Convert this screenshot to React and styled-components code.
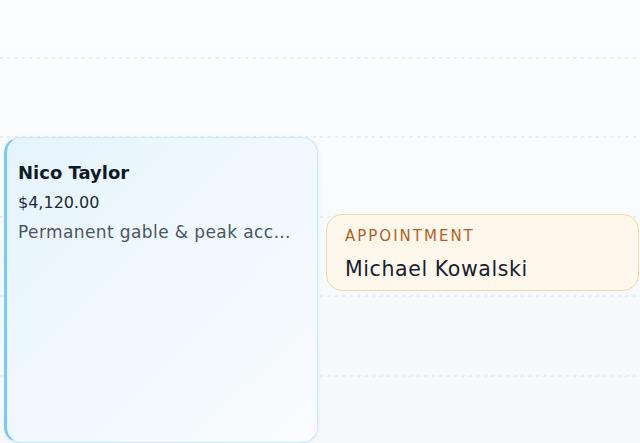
import styled, { createGlobalStyle } from "styled-components";

const GlobalStyle = createGlobalStyle`
  html, body {
    margin: 0;
    padding: 0;
  }
  body {
    font-family: "DejaVu Sans", "Open Sans", sans-serif;
    background: #f8fbfd;
  }
`;

const Canvas = styled.div`
  position: relative;
  width: 640px;
  height: 443px;
  overflow: hidden;
  background: linear-gradient(180deg, #fcfdfe 0%, #f9fbfd 40%, #f5f9fc 100%);
`;

const Slots = styled.div`
  display: grid;
  grid-template-rows: 58px repeat(5, 79.4px);
`;

const Slot = styled.div`
  position: relative;
  &::after {
    content: "";
    position: absolute;
    left: 0;
    right: 0;
    bottom: -1px;
    height: 2px;
    background: repeating-linear-gradient(
      110deg,
      #e9eef4 0 3px,
      transparent 3px 7px
    );
  }
`;

const EventCard = styled.div`
  position: absolute;
  box-sizing: border-box;
  border-radius: 16px;
  padding: ${(p) => p.$pad};
  display: flex;
  flex-direction: column;
`;

const JobCard = styled(EventCard)`
  background: linear-gradient(135deg, #e6f4fe 0%, #eff8fe 45%, #fafcfe 100%);
  border: 1px solid #c9e7fb;
  border-left: 3px solid #7cc8f8;
  box-shadow: 0 1px 4px rgba(14, 116, 184, 0.08);
`;

const AppointmentCard = styled(EventCard)`
  background: #fef8ec;
  border: 1.5px solid #f0d9a6;
`;

const Name = styled.div`
  font-size: 18px;
  font-weight: 700;
  color: #111827;
  line-height: 26px;
`;

const Amount = styled.div`
  font-size: 16px;
  color: #1f2937;
  line-height: 24px;
  margin-top: 5px;
`;

const Description = styled.div`
  font-size: 17px;
  letter-spacing: 0.4px;
  color: #4b5563;
  line-height: 24px;
  margin-top: 5px;
  white-space: nowrap;
  overflow: hidden;
`;

const Kind = styled.div`
  font-size: 15px;
  letter-spacing: 2px;
  text-transform: uppercase;
  color: #b45f26;
  line-height: 20px;
`;

const Client = styled.div`
  font-size: 20.5px;
  letter-spacing: 0.6px;
  color: #172033;
  line-height: 26px;
  margin-top: 10px;
`;

export default function App() {
  return (
    <>
      <GlobalStyle />
      <Canvas>
        <Slots>
          {Array.from({ length: 6 }).map((_, i) => (
            <Slot key={i} />
          ))}
        </Slots>
        <JobCard
          $pad="22px 18px 0 11px"
          style={{ left: 4, top: 137, width: 314, height: 306 }}
        >
          <Name>Nico Taylor</Name>
          <Amount>$4,120.00</Amount>
          <Description>Permanent gable &amp; peak acc…</Description>
        </JobCard>
        <AppointmentCard
          $pad="11px 18px 0 18px"
          style={{ left: 326, top: 214, width: 313, height: 77 }}
        >
          <Kind>Appointment</Kind>
          <Client>Michael Kowalski</Client>
        </AppointmentCard>
      </Canvas>
    </>
  );
}
